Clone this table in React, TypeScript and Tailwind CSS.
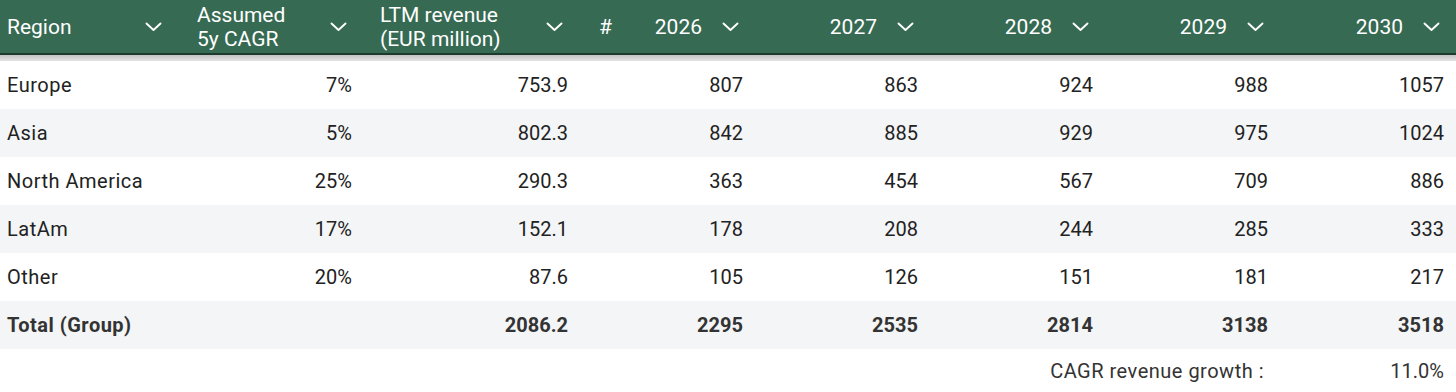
import React from 'react';

interface Row {
  region: string;
  cagr: string;
  ltm: string;
  years: string[];
  total?: boolean;
}

const rows: Row[] = [
  { region: 'Europe', cagr: '7%', ltm: '753.9', years: ['807', '863', '924', '988', '1057'] },
  { region: 'Asia', cagr: '5%', ltm: '802.3', years: ['842', '885', '929', '975', '1024'] },
  { region: 'North America', cagr: '25%', ltm: '290.3', years: ['363', '454', '567', '709', '886'] },
  { region: 'LatAm', cagr: '17%', ltm: '152.1', years: ['178', '208', '244', '285', '333'] },
  { region: 'Other', cagr: '20%', ltm: '87.6', years: ['105', '126', '151', '181', '217'] },
  { region: 'Total (Group)', cagr: '', ltm: '2086.2', years: ['2295', '2535', '2814', '3138', '3518'], total: true },
];

const years = ['2026', '2027', '2028', '2029', '2030'];

const cols = 'grid grid-cols-[178px_186px_216px_60px_115px_175px_175px_175px_176px]';

function Chevron() {
  return (
    <svg width="17" height="10" viewBox="0 0 17 10" fill="none" className="shrink-0">
      <polyline points="1.5,1.5 8.5,8 15.5,1.5" stroke="white" strokeWidth="1.9" strokeLinecap="round" strokeLinejoin="round" />
    </svg>
  );
}

export default function App() {
  return (
    <div
      className="w-[1456px] h-[392px] bg-white text-[20px] text-[#222222] overflow-hidden"
      style={{ fontFamily: 'Roboto, "Liberation Sans", sans-serif' }}
    >
      {/* header */}
      <div className={`${cols} h-[53px] bg-[#366a53] text-white text-[21px] leading-[24px]`}>
        <div className="flex items-center justify-between pl-[7px] pr-[16px]">
          <span>Region</span>
          <Chevron />
        </div>
        <div className="flex items-center justify-between pl-[19px] pr-[17px]">
          <span>Assumed<br />5y CAGR</span>
          <Chevron />
        </div>
        <div className="flex items-center justify-between pl-[16px] pr-[17px]">
          <span>LTM revenue<br />(EUR million)</span>
          <Chevron />
        </div>
        <div className="flex items-center pl-[19px]">
          <span>#</span>
        </div>
        {years.map((y) => (
          <div key={y} className="flex items-center justify-end gap-[20px] pr-[16px]">
            <span>{y}</span>
            <Chevron />
          </div>
        ))}
      </div>
      <div className="h-[2px] bg-[#1d3b2d]" />
      <div className="h-[6px] bg-gradient-to-b from-[#c2c2c2] to-[#e4e4e4]" />

      {/* body */}
      {rows.map((r, i) => (
        <div
          key={r.region}
          className={`${cols} h-12 items-center ${i % 2 === 1 ? 'bg-[#f4f5f7]' : 'bg-white'} ${r.total ? 'font-bold text-[#333333]' : ''}`}
        >
          <div className="pl-[7px] tracking-[0.5px]">{r.region}</div>
          <div className="text-right pr-3">{r.cagr}</div>
          <div className="text-right pr-3">{r.ltm}</div>
          <div />
          {r.years.map((v, j) => (
            <div key={j} className="text-right pr-3">{v}</div>
          ))}
        </div>
      ))}

      {/* footer */}
      <div className={`${cols} h-[43px] items-center text-[#333333]`}>
        <div className="col-start-7 col-span-2 text-right pr-[16px] whitespace-nowrap tracking-[0.5px]">CAGR revenue growth :</div>
        <div className="text-right pr-3">11.0%</div>
      </div>
    </div>
  );
}
